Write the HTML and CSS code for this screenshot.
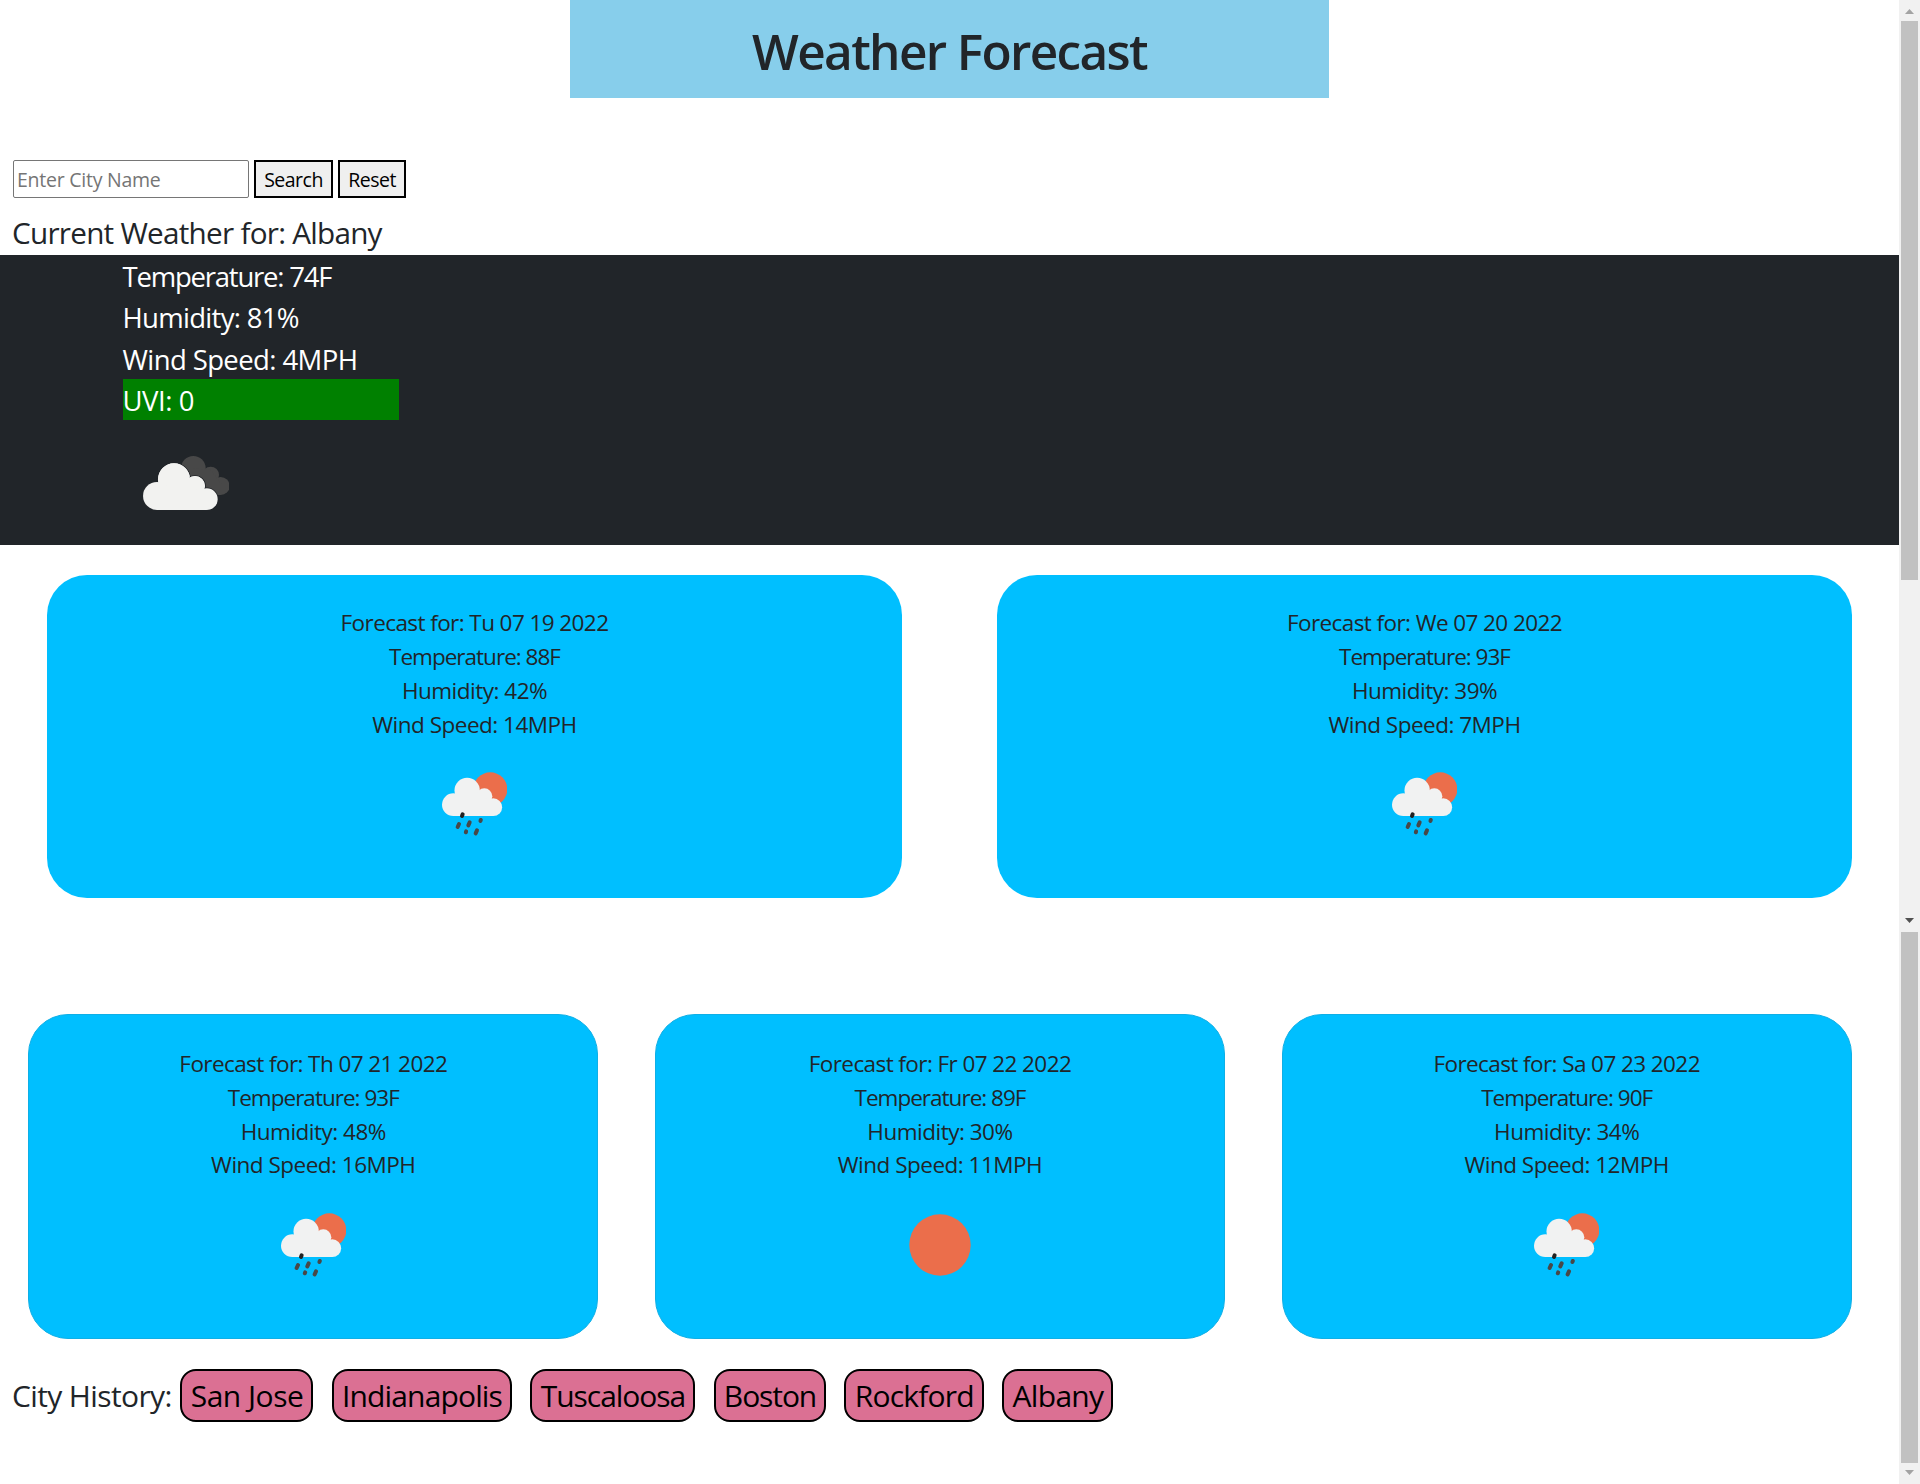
FILE: index.html
```html
<!DOCTYPE html>
<html lang="en">
<head>
<meta charset="utf-8">
<title>Weather Forecast</title>
<link rel="stylesheet" href="styles.css">
</head>
<body>
<svg class="defs" aria-hidden="true">
  <symbol id="rain" viewBox="366 605 196 192">
    <circle cx="511" cy="657" r="51" fill="#eb6e4b"/>
    <g fill="#f1f2f2">
      <circle cx="400" cy="703" r="34"/>
      <circle cx="441.500" cy="660" r="38"/>
      <circle cx="493" cy="678" r="24"/>
      <circle cx="520" cy="710.500" r="26.500"/>
      <path d="M400 680H470L520 690V737H400z"/>
    </g>
    <g stroke="#484848" stroke-width="12" stroke-linecap="round">
      <path d="M428 732l-2 5" stroke="#222"/>
      <path d="M417 761l-4 9M449 756l-4 9M482.500 749l-1 3M438.500 783l-1 3M471 780l-4 9"/>
    </g>
  </symbol>
  <symbol id="clouds" viewBox="429 948 260 163">
    <g fill="#484848">
      <circle cx="580" cy="985" r="37"/>
      <circle cx="632" cy="1005" r="25"/>
      <circle cx="662" cy="1038" r="27"/>
      <path d="M580 985L632 990L662 1030V1065H600z"/>
    </g>
    <g fill="#f2f2f0">
      <g stroke="#212529" stroke-width="5" paint-order="stroke">
        <circle cx="522" cy="1018" r="48"/>
        <circle cx="585" cy="1038" r="30"/>
        <circle cx="620.500" cy="1077.500" r="32.500"/>
      </g>
      <circle cx="522" cy="1018" r="48"/>
      <circle cx="585" cy="1038" r="30"/>
      <circle cx="471" cy="1068" r="42"/>
      <path d="M471 1040H560L620 1060V1110H471z"/>
    </g>
  </symbol>
  <symbol id="sun" viewBox="0 0 62 62"><circle cx="31" cy="31" r="30.700" fill="#eb6e4b"/></symbol>
</svg>
<div class="page">
  <main class="content">
    <h1 class="title">Weather Forecast</h1>
    <form class="search">
      <input class="city" type="text" placeholder="Enter City Name">
      <button class="btn" type="button">Search</button>
      <button class="btn" type="button">Reset</button>
    </form>
    <h2 class="current-title">Current Weather for: Albany</h2>
    <section class="current">
      <p class="temp">Temperature: 74F</p>
      <p>Humidity: 81%</p>
      <p class="wind">Wind Speed: 4MPH</p>
      <p class="uvi">UVI: 0</p>
      <svg class="current-icon"><use href="#clouds"/></svg>
    </section>
    <section class="row row-two">
      <article class="card">
        <p class="date">Forecast for: Tu 07 19 2022</p>
        <p class="temp">Temperature: 88F</p>
        <p>Humidity: 42%</p>
        <p>Wind Speed: 14MPH</p>
        <svg class="icon"><use href="#rain"/></svg>
      </article>
      <article class="card">
        <p class="date">Forecast for: We 07 20 2022</p>
        <p class="temp">Temperature: 93F</p>
        <p>Humidity: 39%</p>
        <p>Wind Speed: 7MPH</p>
        <svg class="icon"><use href="#rain"/></svg>
      </article>
    </section>
    <section class="row row-three">
      <article class="card">
        <p class="date">Forecast for: Th 07 21 2022</p>
        <p class="temp">Temperature: 93F</p>
        <p>Humidity: 48%</p>
        <p>Wind Speed: 16MPH</p>
        <svg class="icon"><use href="#rain"/></svg>
      </article>
      <article class="card">
        <p class="date">Forecast for: Fr 07 22 2022</p>
        <p class="temp">Temperature: 89F</p>
        <p>Humidity: 30%</p>
        <p>Wind Speed: 11MPH</p>
        <svg class="icon icon-sun"><use href="#sun"/></svg>
      </article>
      <article class="card">
        <p class="date">Forecast for: Sa 07 23 2022</p>
        <p class="temp">Temperature: 90F</p>
        <p>Humidity: 34%</p>
        <p>Wind Speed: 12MPH</p>
        <svg class="icon"><use href="#rain"/></svg>
      </article>
    </section>
    <section class="history">
      <h2 class="history-title">City History:</h2>
      <button class="tag san-jose" type="button">San Jose</button>
      <button class="tag indianapolis" type="button">Indianapolis</button>
      <button class="tag tuscaloosa" type="button">Tuscaloosa</button>
      <button class="tag boston" type="button">Boston</button>
      <button class="tag rockford" type="button">Rockford</button>
      <button class="tag albany" type="button">Albany</button>
    </section>
  </main>
  <aside class="scroll">
    <div class="track track-top"><i class="arrow up"></i><i class="thumb"></i><i class="arrow down dark"></i></div>
    <div class="track track-bottom"><i class="thumb"></i><i class="arrow down"></i></div>
  </aside>
</div>
</body>
</html>
```
FILE: styles.css
```css
* { box-sizing: border-box; }
body { margin: 0; background: #fff; color: #212529; font-family: "Open Sans", "Noto Sans", sans-serif; font-size: 20px; overflow: hidden; }
h1, h2, p { margin: 0; font-weight: 400; }
.defs { display: none; }
.page { display: flex; width: 1920px; height: 1484px; }
.content { width: 1899px; display: flex; flex-direction: column; }

.title { width: 759px; height: 98px; margin-left: 570px; padding-top: 16px; background: #87ceeb; font-size: 49.500px; line-height: 71px; font-weight: 600; text-align: center; letter-spacing: -1.650px; }

.search { display: flex; gap: 5px; height: 38px; margin: 62px 0 0 13px; }
.city, .btn { height: 38px; font-family: inherit; font-size: 19.500px; line-height: 30px; letter-spacing: -0.500px; }
.city { width: 236px; padding: 1px 3px; border: 1px solid #767676; border-radius: 2px; outline: none; letter-spacing: -0.250px; }
.city::placeholder { color: #757575; opacity: 1; }
.btn { width: 79px; padding: 2px 0 0; border: 2px solid #000; background: #efefef; color: #000; }
.btn + .btn { width: 68px; }

.current-title { height: 57px; padding: 13px 0 0 12px; font-size: 29.700px; line-height: 43px; letter-spacing: -0.740px; }
.current { height: 290px; padding-left: 122.500px; background: #212529; color: #fff; font-size: 27.500px; line-height: 41.250px; letter-spacing: -0.700px; }
.current p { height: 41.250px; padding-top: 1px; }
.current .temp { letter-spacing: -1.220px; }
.current .wind { letter-spacing: -0.600px; }
.current .uvi { width: 276px; background: green; letter-spacing: -0.450px; }
.current-icon { display: block; width: 86.700px; height: 54.300px; margin: 36px 0 0 20px; }

.row { display: flex; }
.row-two { gap: 95px; padding: 30px 0 0 47px; height: 469px; }
.row-three { gap: 56.700px; padding-left: 28.300px; height: 325px; }
.card { width: 855px; height: 323px; padding-top: 31px; border-radius: 40px; background: #00bfff; font-size: 22.500px; line-height: 33.900px; letter-spacing: -0.500px; text-align: center; }
.card .date { letter-spacing: -0.580px; }
.card .temp { letter-spacing: -0.980px; }
.row-three .card { width: 570px; height: 325px; padding-top: 32px; border: 1px solid #0fafe6; line-height: 33.750px; }
.icon { display: block; width: 65.300px; height: 64px; margin: 30px auto 0; }
.row-three .icon { margin-top: 31px; }
.row-three .icon-sun { width: 62px; height: 62px; margin-top: 32px; }

.history { display: flex; align-items: flex-start; gap: 18.500px; height: 145px; padding: 30px 0 0 12px; }
.history-title { width: 149.500px; font-size: 30px; line-height: 54px; letter-spacing: -0.630px; white-space: nowrap; }
.tag { height: 53px; padding: 0 0 0 1px; border: 2px solid #000; border-radius: 16px; background: #db7093; color: #000; font-family: inherit; font-size: 30px; line-height: 46px; }
.san-jose { width: 133px; letter-spacing: -0.500px; }
.indianapolis { width: 180px; letter-spacing: -0.850px; }
.tuscaloosa { width: 165px; letter-spacing: -1.050px; }
.boston { width: 112px; letter-spacing: -1.100px; }
.rockford { width: 139.500px; letter-spacing: -0.800px; }
.albany { width: 111px; letter-spacing: -0.700px; }

.scroll { display: flex; flex-direction: column; width: 21px; background: #f1f1f1; }
.track { display: flex; flex-direction: column; align-items: center; }
.track-top { height: 932px; }
.track-bottom { height: 552px; }
.thumb { width: 17px; height: 559px; background: #c1c1c1; }
.track-bottom .thumb { height: 531px; }
.arrow { width: 9px; height: 5px; background: #a3a3a3; }
.up { margin: 9px 0 7px; clip-path: polygon(50% 0, 100% 100%, 0 100%); }
.down { margin-top: 7px; clip-path: polygon(0 0, 100% 0, 50% 100%); }
.dark { margin: auto 0 9px; background: #505050; }
```
